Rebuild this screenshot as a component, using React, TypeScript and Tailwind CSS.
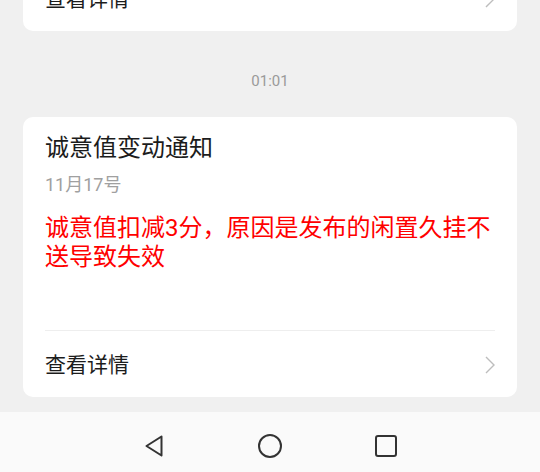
import React from "react";

const font = { fontFamily: 'Roboto, "Noto Sans CJK SC", sans-serif' };

function Chevron() {
  return (
    <svg width="10" height="18" viewBox="0 0 10 18" fill="none">
      <polyline points="1,1 9,9 1,17" stroke="#bdbdbd" strokeWidth="1.4" strokeLinejoin="miter" />
    </svg>
  );
}

function DetailRow() {
  return (
    <div className="flex h-[66px] items-center pt-[2px]">
      <span className="text-[21px] leading-[28px] text-[#1c1c1c]">查看详情</span>
      <span className="ml-auto flex">
        <Chevron />
      </span>
    </div>
  );
}

export default function App() {
  return (
    <div className="flex h-[472px] w-[540px] flex-col overflow-hidden bg-[#f0f0f0]" style={font}>
      {/* MESSAGES */}
      <div className="h-[412px] overflow-hidden px-[23px]">
        {/* PREVIOUS CARD (cut off) */}
        <div className="-mt-[35px] rounded-b-[10px] bg-white px-[22px]">
          <DetailRow />
        </div>

        {/* TIME */}
        <div className="h-[86px] pt-[40px] text-center text-[15px] leading-[20px] text-[#9a9a9a]">01:01</div>

        {/* CARD */}
        <div className="rounded-[10px] bg-white px-[22px] pt-[16px]">
          <div className="text-[24px] leading-[30px] text-[#1c1c1c]">诚意值变动通知</div>
          <div className="mt-[10px] text-[18px] leading-[24px] text-[#a0a0a0]">11月17号</div>
          <div className="mt-[17px] text-[24px] leading-[29px] text-[#ff0000]">
            诚意值扣减3分，原因是发布的闲置久挂不送导致失效
          </div>
          <div className="mt-[58px] border-t border-[#eeeeee]">
            <DetailRow />
          </div>
        </div>
      </div>

      {/* NAV BAR */}
      <div className="flex h-[60px] items-center justify-center gap-[92px] bg-[#fafafa] pt-[8px]">
        <svg width="24" height="24" viewBox="0 0 24 24" fill="none">
          <path d="M19.5 2.5 L4.5 12 L19.5 21.5 Z" stroke="#333" strokeWidth="2" strokeLinejoin="round" />
        </svg>
        <svg width="24" height="24" viewBox="0 0 24 24" fill="none">
          <circle cx="12" cy="12" r="11" stroke="#333" strokeWidth="2" />
        </svg>
        <svg width="24" height="24" viewBox="0 0 24 24" fill="none">
          <rect x="2" y="2" width="20" height="20" rx="2" stroke="#333" strokeWidth="2" />
        </svg>
      </div>
    </div>
  );
}
